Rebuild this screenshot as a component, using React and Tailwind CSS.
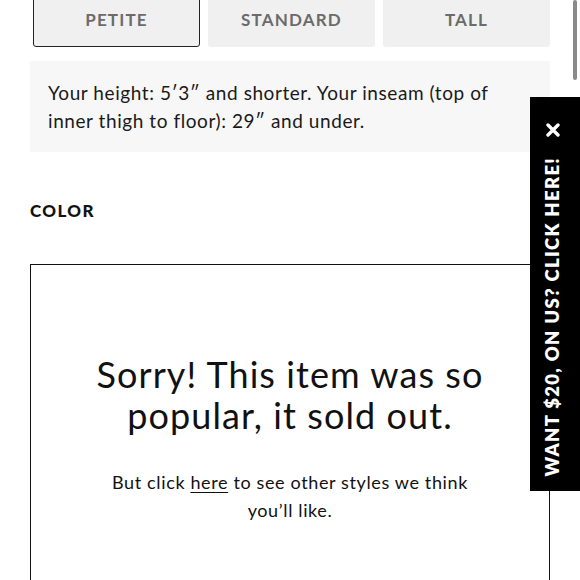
export default function App() {
  const sizes = ['PETITE', 'STANDARD', 'TALL'];

  return (
    <div className="relative h-[580px] w-[580px] overflow-hidden bg-white font-['Lato',sans-serif] text-[#111]">
      {/* Fit selector */}
      <div className="px-[30px]">
        <div className="-mt-[9px] grid grid-cols-3 gap-[8px] pl-[3px]">
          {sizes.map((s, i) => (
            <div
              key={s}
              className={`flex h-[56px] items-center justify-center rounded-[3px] bg-[#f0f0f0] pt-[2px] text-[17px] font-bold tracking-[0.07em] text-[#6b6b6b] ${
                i === 0 ? 'border-[1.5px] border-[#222]' : ''
              }`}
            >
              {s}
            </div>
          ))}
        </div>

        {/* Height info */}
        <div className="mt-[14px] h-[91px] bg-[#f7f7f7] pl-[18px] pr-[40px] pt-[18px] text-[19px] leading-[28px] tracking-[0.03em] text-[#1a1a1a]">
          Your height: 5′3″ and shorter. Your inseam (top of inner thigh to floor): 29″ and under.
        </div>

        <div className="mt-[46px] text-[17px] font-black tracking-[0.08em] text-[#111]">COLOR</div>

        {/* Sold out box */}
        <div className="mt-[40px] h-[360px] border-[1.5px] border-[#111] px-[30px] pt-[89px] text-center">
          <div className="text-[36px] leading-[41px] tracking-[0.03em] text-[#111]">
            Sorry! This item was so popular, it sold out.
          </div>
          <div className="mx-auto mt-[32px] w-[390px] text-[18px] leading-[28px] tracking-[0.035em] text-[#111]">
            But click <span className="underline underline-offset-[3px]">here</span> to see other styles we think you’ll like.
          </div>
        </div>
      </div>

      {/* Scrollbar */}
      <div className="absolute right-[3px] top-0 h-[80px] w-[4px] rounded-full bg-[#8a8a8a]" />

      {/* Promo side tab */}
      <div className="absolute right-0 top-[97px] flex h-[394px] w-[50px] flex-col items-center bg-black pr-[4px]">
        <svg className="mt-[26px]" width="14" height="14" viewBox="0 0 14 14">
          <path d="M2 2 L12 12 M12 2 L2 12" stroke="white" strokeWidth="3.4" strokeLinecap="round" />
        </svg>
        <div className="mt-[20px] rotate-180 whitespace-nowrap text-[18.5px] font-extrabold tracking-[0.07em] text-white [writing-mode:vertical-rl]">
          WANT $20, ON US? CLICK HERE!
        </div>
      </div>
    </div>
  );
}
